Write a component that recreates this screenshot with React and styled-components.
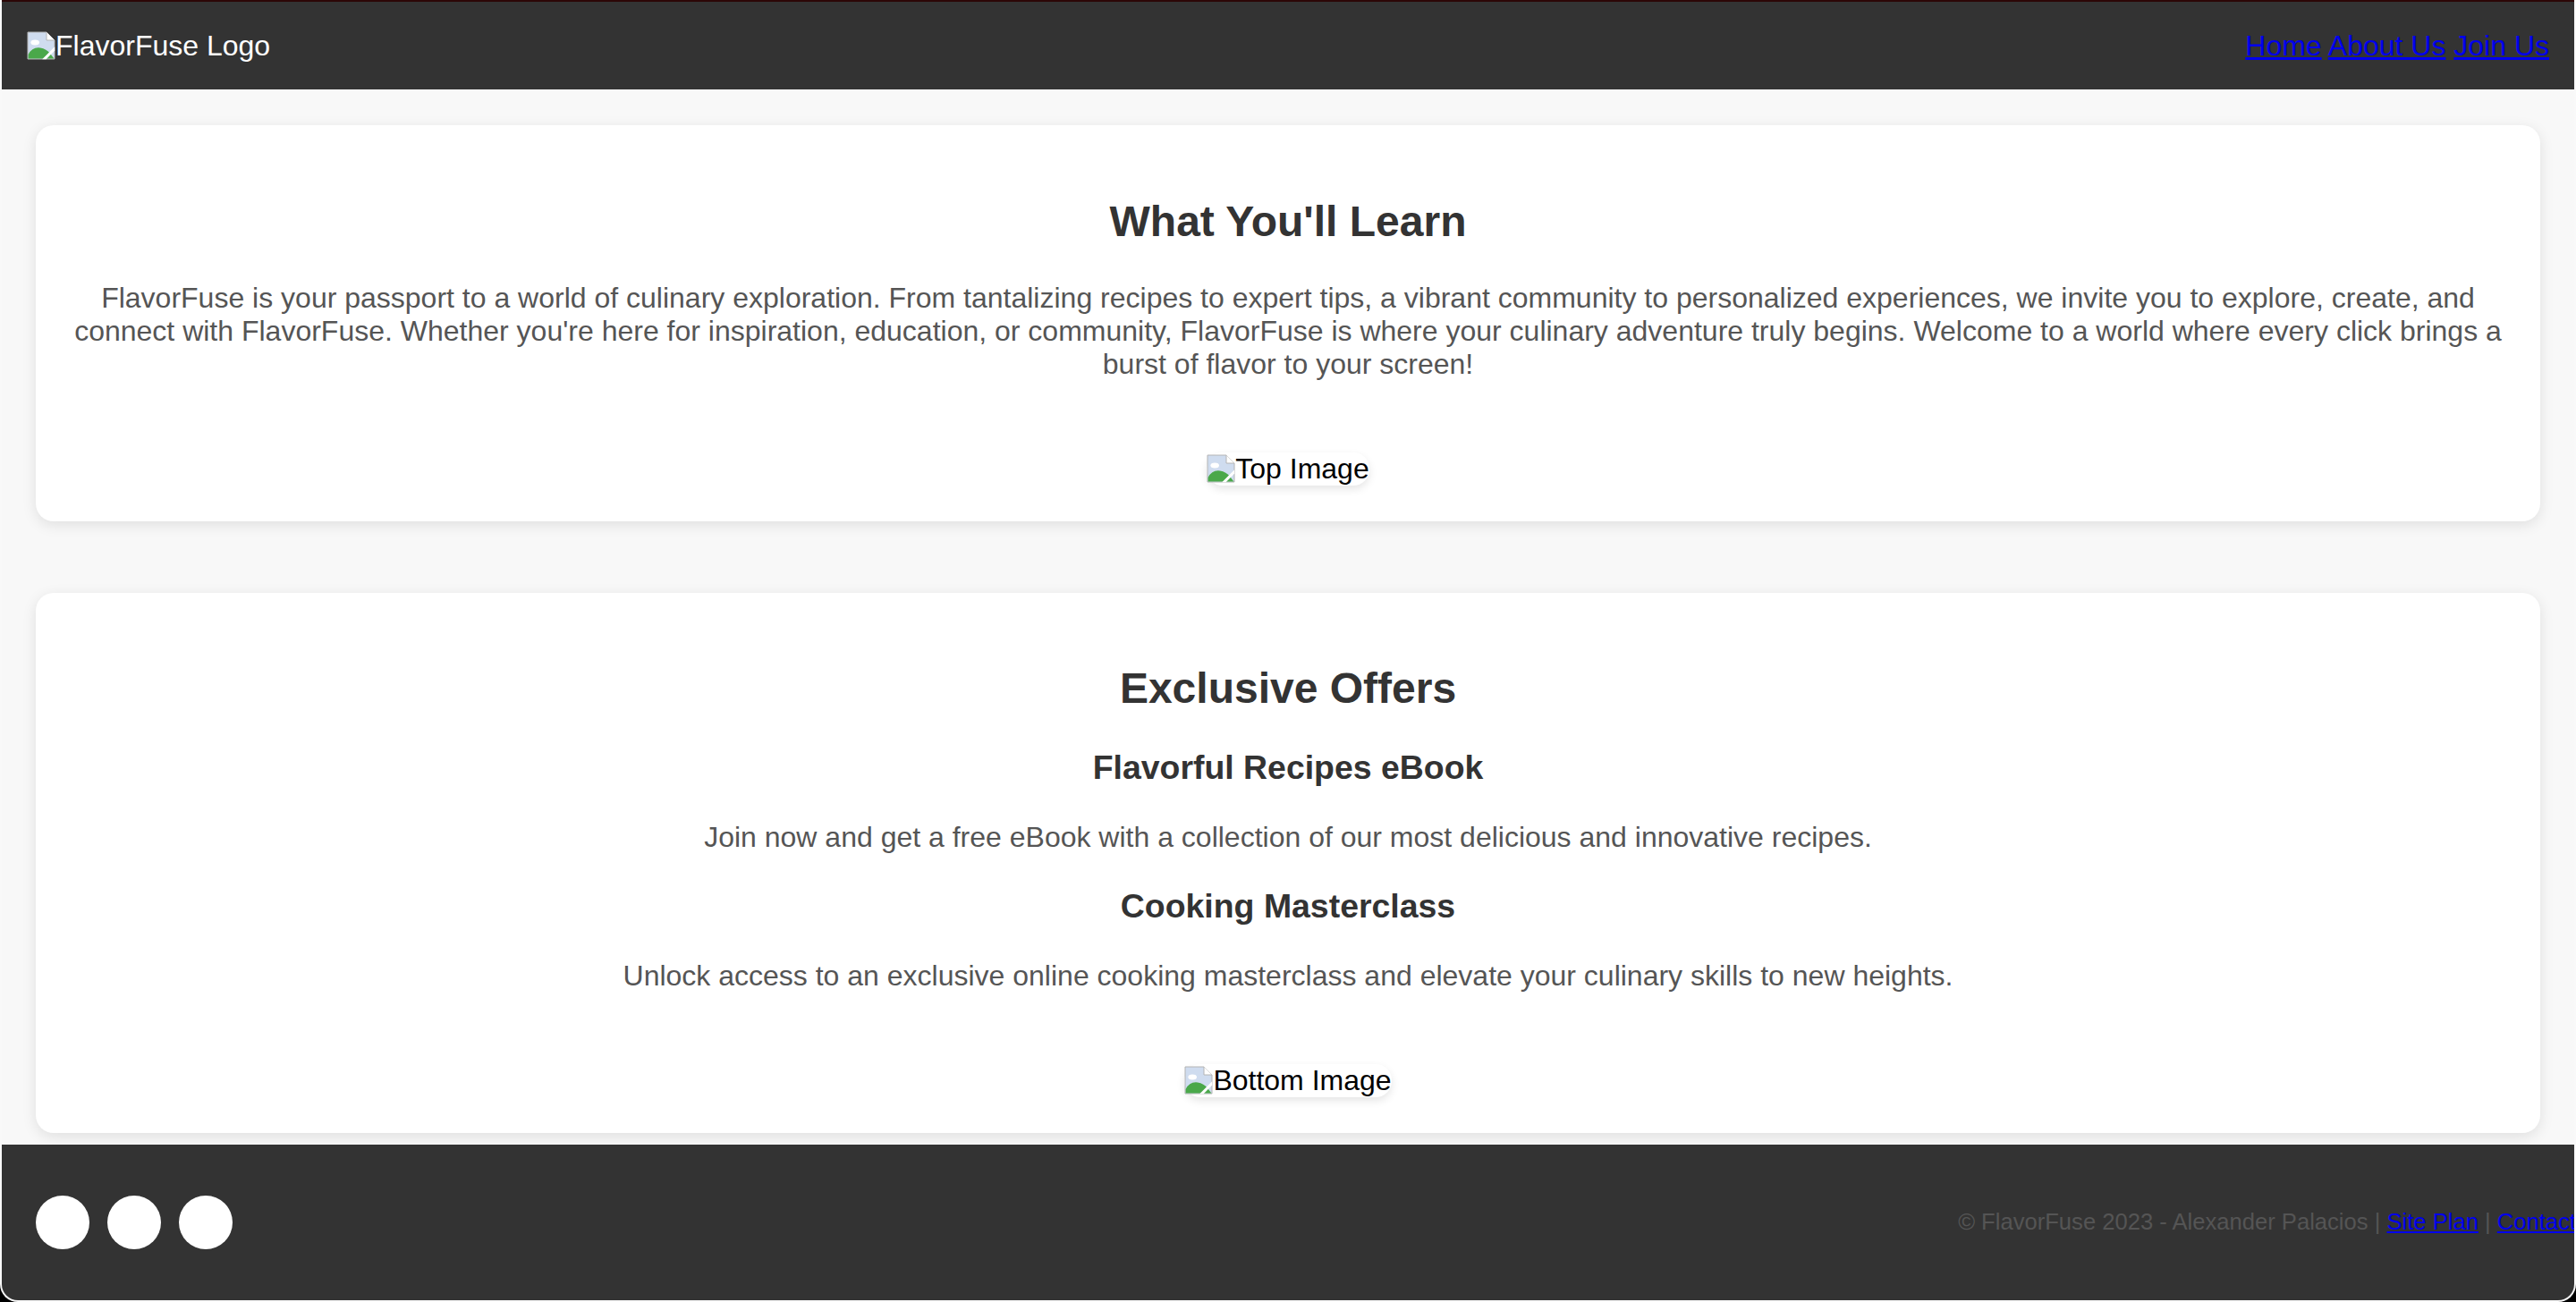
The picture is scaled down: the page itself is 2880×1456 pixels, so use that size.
import React from 'react';
import styled, { createGlobalStyle } from 'styled-components';

const GlobalStyle = createGlobalStyle`
  html, body {
    margin: 0;
    padding: 0;
    background: #000;
  }
  body {
    font-family: "Liberation Sans", Arial, sans-serif;
  }
`

function BrokenIcon() {
  return (
    <svg width="32" height="32" viewBox="0 0 16 16">
      <path d="M0.5 0.5 H11 L15.5 5 V15.5 H0.5 Z" fill="#cfdcef" stroke="#b4b4b4" strokeWidth="0.5" />
      <ellipse cx="4.6" cy="6.2" rx="2.4" ry="1.5" fill="#fff" />
      <path d="M0.8 13 Q3 8.6 7.5 9.2 Q11 9.8 13 12.4 L15.2 15.2 H0.8 Z" fill="#4aa84a" />
      <path d="M11 0.5 V5 H15.5" fill="#fff" stroke="#b4b4b4" strokeWidth="0.5" />
      <path d="M8.6 15.6 L15.6 8.6 V10.8 L10.8 15.6 Z" fill="#fff" />
    </svg>
  )
}

export default function App() {
  return (
    <Frame>
      <GlobalStyle />
      <Header>
        <Logo>
          <BrokenIcon />
          <span>FlavorFuse Logo</span>
        </Logo>
        <Nav>
          <a href="#home">Home</a> <a href="#about">About Us</a> <a href="#join">Join Us</a>
        </Nav>
      </Header>

      <Main>
        <Card>
          <h2>What You'll Learn</h2>
          <p>
            FlavorFuse is your passport to a world of culinary exploration. From tantalizing recipes to expert tips, a vibrant community to personalized experiences, we invite you to explore, create, and connect with FlavorFuse. Whether you're here for inspiration, education, or community, FlavorFuse is where your culinary adventure truly begins. Welcome to a world where every click brings a burst of flavor to your screen!
          </p>
          <ImageWrap>
            <AltImage>
              <BrokenIcon />
              <span>Top Image</span>
            </AltImage>
          </ImageWrap>
        </Card>

        <Card>
          <h2>Exclusive Offers</h2>
          <h3>Flavorful Recipes eBook</h3>
          <p>Join now and get a free eBook with a collection of our most delicious and innovative recipes.</p>
          <h3>Cooking Masterclass</h3>
          <p>Unlock access to an exclusive online cooking masterclass and elevate your culinary skills to new heights.</p>
          <ImageWrap>
            <AltImage>
              <BrokenIcon />
              <span>Bottom Image</span>
            </AltImage>
          </ImageWrap>
        </Card>
      </Main>

      <Footer>
        <Socials>
          <Circle />
          <Circle />
          <Circle />
        </Socials>
        <Copy>
          © FlavorFuse 2023 - Alexander Palacios | <a href="#plan">Site Plan</a> | <a href="#contact">Contact</a>
        </Copy>
      </Footer>
    </Frame>
  )
}

const Frame = styled.div`
 height: 100vh;
 display: flex;
 flex-direction: column;
 overflow: hidden;
 background-color: #f8f8f8;
 border-radius: 0 0 20px 20px;
 border: 2px solid rgba(255,255,255,0.18);
 border-top: none;
 box-sizing: border-box;
`

const Header = styled.header`
 flex: 0 0 auto;
 height: 100px;
 box-sizing: border-box;
 border-top: 2px solid #2c0606;
 background-color: #333;
 display: flex;
 align-items: center;
 justify-content: space-between;
 padding: 0 28px;
`

const Logo = styled.div`
 display: flex;
 align-items: center;
 color: #fff;
 font-size: 32px;
 svg{
   flex: 0 0 auto;
 }
`

const Nav = styled.nav`
 font-size: 32px;
 white-space: nowrap;
 a{
   color: #0000ee;
   text-decoration: underline;
 }
`

const Main = styled.main`
 flex: 0 0 auto;
 display: flex;
 flex-direction: column;
 gap: 80px;
 padding: 40px 38px 13px;
`

const Card = styled.section`
 background-color: #fff;
 border-radius: 20px;
 box-shadow: 0 4px 16px rgba(0,0,0,0.1);
 padding: 40px;
 text-align: center;
 h2{
   margin: 39.84px 0;
   font-size: 48px;
   font-weight: 700;
   color: #333;
 }
 h3{
   margin: 37.44px 0;
   font-size: 37.44px;
   font-weight: 700;
   color: #333;
 }
 p{
   margin: 32px 0;
   font-size: 32px;
   color: #555;
 }
`

const ImageWrap = styled.div`
 display: flex;
 justify-content: center;
 margin-top: 80px;
`

const AltImage = styled.span`
 display: inline-flex;
 align-items: center;
 height: 37px;
 border-radius: 18px;
 box-shadow: 0 4px 10px rgba(0,0,0,0.1);
 font-size: 32px;
 color: #000;
 svg{
   flex: 0 0 auto;
 }
`

const Footer = styled.footer`
 flex: 1 1 auto;
 background-color: #333;
 display: flex;
 align-items: center;
 padding: 0 38px;
`

const Socials = styled.div`
 display: flex;
 gap: 20px;
`

const Circle = styled.span`
 width: 60px;
 height: 60px;
 border-radius: 50%;
 background-color: #fff;
`

const Copy = styled.p`
 margin: 0 -40px 0 auto;
 font-size: 25.6px;
 color: #555;
 white-space: nowrap;
 a{
   color: #0000ee;
   text-decoration: underline;
 }
`
